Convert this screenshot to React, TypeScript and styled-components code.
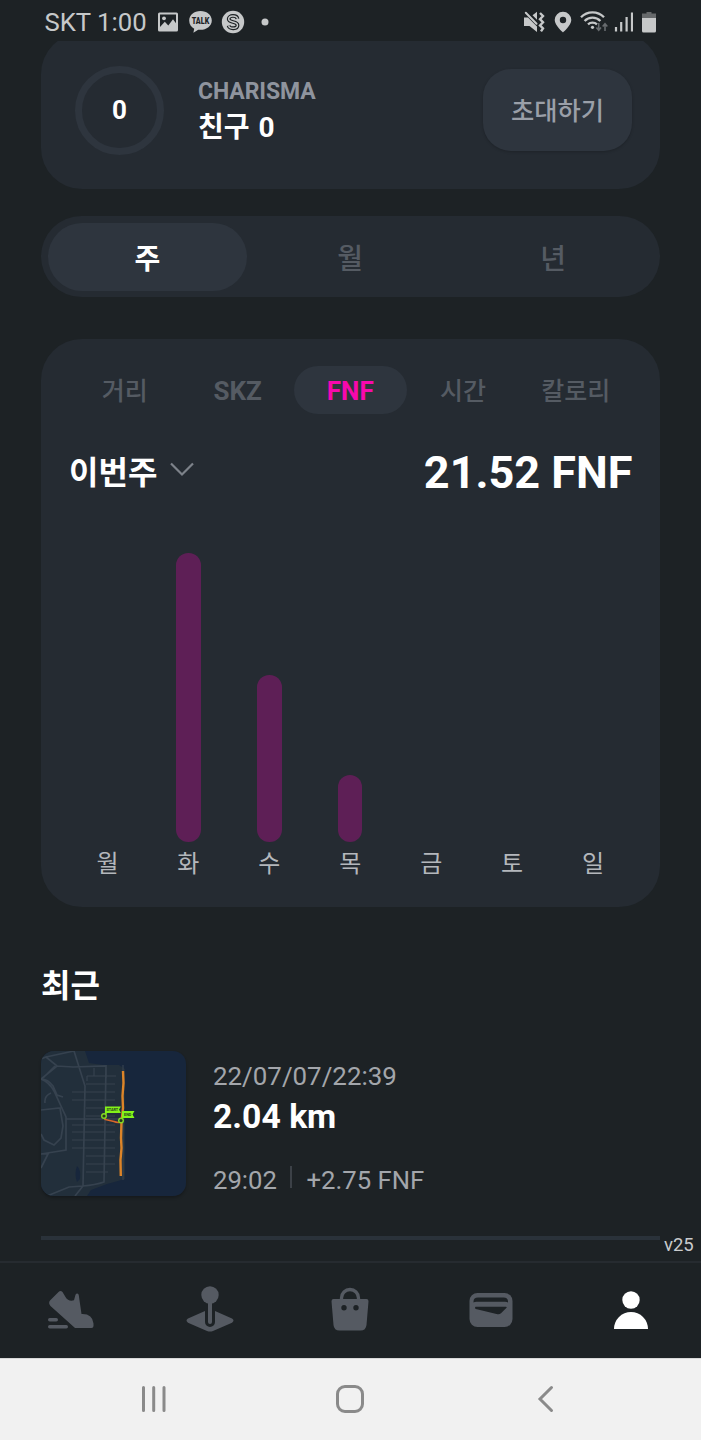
import React from "react";
import styled, { createGlobalStyle } from "styled-components";

const GlobalStyle = createGlobalStyle`
  * { box-sizing: border-box; }
  html, body { margin: 0; padding: 0; background: #1d2225; }
  body { font-family: Roboto, "Noto Sans CJK KR", sans-serif; color: #fff; }
  button { font: inherit; border: 0; padding: 0; background: none; color: inherit; }
  svg { display: block; }
`;

const Screen = styled.div`
  width: 701px;
  height: 1440px;
  display: flex;
  flex-direction: column;
  overflow: hidden;
  background: #1d2225;
`;

const StatusBar = styled.header`
  height: 41px;
  flex: none;
  display: flex;
  align-items: center;
  justify-content: space-between;
  padding: 2px 45px 0 44.500px;
  color: #c6c8c9;
`;

const StatusGroup = styled.div`
  display: flex;
  align-items: center;
`;

const Carrier = styled.span`
  font-size: 25.700px;
  line-height: 30px;
  width: 112.500px;
  white-space: nowrap;
  padding-top: 1px;
`;

const Content = styled.main`
  flex: 1;
  min-height: 0;
  overflow: hidden;
  padding: 0 41.5px 0 41px;
  display: flex;
  flex-direction: column;
`;

const ProfileCard = styled.section`
  flex: none;
  height: 156px;
  margin-top: -8px;
  border-radius: 41px;
  background: #252b32;
  display: flex;
  align-items: center;
  padding: 0 27.500px 2px 34px;
`;

const Ring = styled.div`
  width: 89px;
  height: 89px;
  border: 7px solid #2e353e;
  border-radius: 50%;
  display: flex;
  align-items: center;
  justify-content: center;
  font-size: 26px;
  font-weight: 700;
`;

const ProfileText = styled.div`
  margin-left: 34px;
  flex: 1;
  display: flex;
  flex-direction: column;
  padding-top: 3px;
`;

const StatName = styled.span`
  font-size: 23px;
  line-height: 32px;
  font-weight: 700;
  letter-spacing: -0.1px;
  color: #8f949e;
`;

const StatValue = styled.span`
  font-size: 28px;
  line-height: 40px;
  font-weight: 700;
  word-spacing: 2px;
`;

const InviteButton = styled.button`
  width: 149px;
  height: 82px;
  border-radius: 28px;
  background: #2e353e;
  box-shadow: 0 1px 3px rgba(0, 0, 0, 0.2);
  color: #9a9fa8;
  font-size: 25.300px;
  font-weight: 500;
  padding-bottom: 2px;
`;

const PeriodSwitch = styled.div`
  flex: none;
  height: 81px;
  margin-top: 27px;
  border-radius: 40.5px;
  background: #252b32;
  padding: 6.5px 7px;
  display: grid;
  grid-template-columns: repeat(3, 1fr);
  gap: 4px;
`;

const Period = styled.button<{ $active?: boolean }>`
  border-radius: 34px;
  font-size: 28px;
  font-weight: ${(p) => (p.$active ? 700 : 500)};
  background: ${(p) => (p.$active ? "#2e353e" : "transparent")};
  color: ${(p) => (p.$active ? "#fff" : "#555b63")};
`;

const ChartCard = styled.section`
  flex: none;
  height: 568px;
  margin-top: 42px;
  border-radius: 41px;
  background: #252b32;
  padding: 27px 26px 0 26px;
  display: flex;
  flex-direction: column;
`;

const Metrics = styled.div`
  display: grid;
  grid-template-columns: repeat(5, 1fr);
  height: 48px;
  margin: 0 1.5px;
`;

const Metric = styled.button<{ $active?: boolean }>`
  border-radius: 24px;
  font-size: 26px;
  font-weight: 700;
  padding-top: 2px;
  white-space: nowrap;
  background: ${(p) => (p.$active ? "#2e353e" : "transparent")};
  color: ${(p) => (p.$active ? "#f808ad" : "#555b63")};
  &:lang(ko) {
    font-size: 25px;
    font-weight: 500;
    padding: 0 0 2px;
  }
`;

const Summary = styled.div`
  display: flex;
  align-items: center;
  justify-content: space-between;
  height: 60px;
  margin: 28px 1px 0 2px;
`;

const WeekPicker = styled.button`
  display: flex;
  align-items: center;
  gap: 13px;
  font-size: 32px;
  font-weight: 700;
  padding-bottom: 4px;
`;

const Total = styled.strong`
  font-size: 45px;
  line-height: 60px;
  font-weight: 700;
  padding-top: 2px;
`;

const Chart = styled.div`
  display: grid;
  grid-template-columns: repeat(7, 1fr);
  height: 378px;
  margin-top: 25px;
`;

const Day = styled.div`
  display: flex;
  flex-direction: column;
  align-items: center;
  justify-content: flex-end;
`;

const Bar = styled.div`
  width: 24.5px;
  border-radius: 12.25px;
  background: #5e1f56;
`;

const DayLabel = styled.span`
  height: 40px;
  line-height: 44px;
  margin-bottom: 23px;
  font-size: 24px;
  color: #b4b7bc;
`;

const SectionTitle = styled.h2`
  flex: none;
  margin: 55px 0 0;
  font-size: 32px;
  line-height: 48px;
  font-weight: 700;
`;

const Activity = styled.article`
  flex: none;
  display: flex;
  margin-top: 41px;
  height: 189px;
  border-bottom: 4px solid #2a323a;
`;

const Thumbnail = styled.div`
  width: 145px;
  height: 144.5px;
  border-radius: 13px;
  overflow: hidden;
  box-shadow: 0 2px 3px rgba(0, 0, 0, 0.25);
`;

const ActivityText = styled.div`
  margin-left: 27px;
  display: flex;
  flex-direction: column;
  color: #a3a6ab;
  font-size: 25.900px;
  line-height: 30px;
  padding-top: 10px;
`;

const Distance = styled.strong`
  font-size: 33.700px;
  line-height: 40px;
  color: #fff;
  margin-top: 6px;
`;

const Details = styled.div`
  display: flex;
  align-items: center;
  margin-top: 28px;
  font-size: 25.700px;
`;

const Divider = styled.i`
  width: 2px;
  height: 22px;
  margin: -7px 14px 0 13.500px;
  background: #3c4147;
`;

const Version = styled.span`
  position: absolute;
  left: 664px;
  top: 1234px;
  font-size: 18.500px;
  line-height: 22px;
  color: #c9cbcd;
`;

const TabBar = styled.nav`
  flex: none;
  height: 97px;
  border-top: 2px solid #262b30;
  display: grid;
  grid-template-columns: repeat(5, 1fr);
`;

const Tab = styled.button<{ $active?: boolean }>`
  display: flex;
  align-items: center;
  justify-content: center;
  padding-bottom: 4px;
  color: ${(p) => (p.$active ? "#fff" : "#555a62")};
`;

const SystemNav = styled.footer`
  flex: none;
  height: 82px;
  background: #f1f1f1;
  border-top: 1px solid #d8d8d8;
  display: grid;
  grid-template-columns: repeat(3, 196px);
  align-items: center;
  justify-items: center;
  padding: 0 0 2px 56px;
  color: #8a8a8a;
`;

const StatusIcons = () => (
  <StatusGroup>
    <svg width="22" height="22" viewBox="0 0 22 22">
      <path d="M0 6.500h4L13 15.500V21l-7.500-6H0zM8.500 4.200L13 .8v8z" fill="currentColor" />
      <path d="M1.800 1.800L12.500 12.800" stroke="currentColor" strokeWidth="2" strokeLinecap="round" />
      <path d="M16 1.500l3 3-3 3.200 3 3-3 3.200 3 3-2 3" transform="translate(0 .5)" fill="none" stroke="currentColor" strokeWidth="2.400" />
    </svg>
    <svg width="18" height="22" viewBox="0 0 18 22" style={{ marginLeft: 8 }}>
      <path d="M9 .8a8.300 8.300 0 0 0-8.300 8.300C.7 14.500 9 21.500 9 21.500s8.300-7 8.300-12.400A8.300 8.300 0 0 0 9 .8zm0 5a3.200 3.200 0 1 1 0 6.400 3.200 3.200 0 0 1 0-6.400z" fill="currentColor" />
    </svg>
    <svg width="28" height="22" viewBox="0 0 28 22" style={{ marginLeft: 8 }}>
      <g fill="none" stroke="currentColor" strokeWidth="2.300">
        <path d="M1 6.200a16 16 0 0 1 23 0" />
        <path d="M4.600 10a11 11 0 0 1 15.800 0" />
        <path d="M8 13.400a6.500 6.500 0 0 1 9 0" />
      </g>
      <circle cx="12.500" cy="16.300" r="1.600" fill="currentColor" />
      <path d="M18.700 12v7m-2.300-2.500l2.300 2.700 2.300-2.700M25 20v-7m-2.300 2.500l2.300-2.700 2.300 2.700" fill="none" stroke="#676b6e" strokeWidth="1.600" />
    </svg>
    <svg width="19" height="22" viewBox="0 0 19 22" style={{ marginLeft: 6 }}>
      <path d="M2 20.500v-4.500M7.200 20.500v-9.500M12.600 20.500V6M18 20.500V1.500" stroke="currentColor" strokeWidth="2.200" />
    </svg>
    <svg width="14" height="22" viewBox="0 0 14 22" style={{ marginLeft: 9 }}>
      <path d="M4.500 1h5v1.500H14V7H0V2.500h4.500z" fill="#66696b" />
      <path d="M0 7h14v13a1.500 1.500 0 0 1-1.500 1.500h-11A1.500 1.500 0 0 1 0 20z" fill="currentColor" />
    </svg>
  </StatusGroup>
);

const AppIcons = () => (
  <svg width="114" height="24" viewBox="0 0 114 24">
    <path fillRule="evenodd" fill="currentColor" d="M2.500 2.500h17a1.500 1.500 0 0 1 1.500 1.500v16a1.500 1.500 0 0 1-1.500 1.500h-17A1.500 1.500 0 0 1 1 20V4a1.500 1.500 0 0 1 1.500-1.500zM3 4.500v12.500l4.800-5.300 3.500 3.800 4.700-6.200 3 4V4.500z" />
    <circle cx="7" cy="8.300" r="1.900" fill="currentColor" />
    <path fill="currentColor" d="M43.500 1C37 1 32.200 5 32.200 10.500c0 3.800 2 6.600 5 8.200l-.8 4 4.800-3c7.300 1 13.600-3.200 13.600-9.200C54.800 5 50 1 43.500 1z" />
    <text x="43.500" y="13.600" textAnchor="middle" fontFamily="Roboto" fontSize="8.400" fontWeight="900" fill="#1d2225" textLength="17.500" lengthAdjust="spacingAndGlyphs">TALK</text>
    <circle cx="76" cy="12" r="11.200" fill="currentColor" />
    <path d="M80.500 8.800c-.8-4-8.800-3.800-8.800.2 0 4 8.800 2 8.800 6.200 0 4-8 4-8.900.4" fill="none" stroke="#1d2225" strokeWidth="3.800" />
    <path d="M80.500 8.800c-.8-4-8.800-3.800-8.800.2 0 4 8.800 2 8.800 6.200 0 4-8 4-8.900.4" fill="none" stroke="currentColor" strokeWidth="1.500" />
    <circle cx="108" cy="12" r="3.500" fill="currentColor" />
  </svg>
);

const RouteMap = () => (
  <svg width="145" height="145" viewBox="0 0 145 145">
    <rect width="145" height="145" fill="#17263c" />
    <path d="M0 0h44l4 12 14 2h16l6 4v110l-18 5-16 6-4 6H0z" fill="#222f3b" />
    <path d="M36 115q4 3 3 13l-3 3q-3-8 0-16z" fill="#17263c" />
    <g fill="none" stroke="#36424f" strokeWidth="1.700">
      <path d="M0 8L5 6l11 9 16 1 33-1v12M5 6L33 0l11 35-2 100-8 10M16 15L0 28q8 3 13 12l12 26v33L0 103M0 28q7 0 12 7l4 9 6 2M14 15L2 27M65 16l-2 115q-9 3-21 4l-14 1-22 9M25 68h57M0 59l19-2 3 18-2 12-7 7-10-5-3-6M0 103l7 0-7 14M10 42q-7 3-6 10" />
      <path d="M53 17v8h12M46 25h29M46 25v5M45 33h29M31 41h43M31 49h43M45 57h29M45 65h29M31 74h43M31 81h43M31 89h43M31 97h43M45 105h29M45 113h29M45 121h22M82 14v115" strokeWidth="1.200" />
    </g>
    <path d="M82 20l.5 12-1 13 .5 12-1.500 14-.5 16 .5 10-1 12 .3 16" fill="none" stroke="#dd8428" strokeWidth="2.400" />
    <path d="M81 71q-5 1-8-.5l-9-2v-4" fill="none" stroke="#d9662a" strokeWidth="1.500" />
    <g fill="#83f319">
      <path d="M64 55.500h16l-2 3 2 3.500H66l-2 4z" />
      <path d="M81 60h12.500l-2 3.500 2 3.500H82l-1 3z" />
    </g>
    <g fill="#26391e" stroke="#83d823" strokeWidth="1.400">
      <circle cx="63" cy="65" r="2.300" />
      <circle cx="80" cy="69.500" r="2.300" />
    </g>
    <g fontFamily="Roboto" fontSize="3.800" fontWeight="700" fill="#26391e">
      <text x="65.500" y="60.300">START</text>
      <text x="83" y="65">END</text>
    </g>
  </svg>
);

const ShoeIcon = () => (
  <svg width="48" height="48" viewBox="-1 0 48 48" fill="currentColor">
    <path d="M3 15.500L11.500 7q2-2 4 0l3 5q3 5 8.500 3.300l1.500-5.500q1.600-2.400 3.200 0L34.500 29q11-.5 12 9.500v2.500q0 2-2 2H28L3.500 21Q1 18 3 15.500z" />
    <rect x="1" y="33" width="10" height="3.500" rx="1.700" />
    <rect x="1" y="40" width="20" height="3.500" rx="1.700" />
  </svg>
);

const JoystickIcon = () => (
  <svg width="48" height="48" viewBox="0 0 48 48" fill="currentColor">
    <circle cx="24" cy="10" r="8.700" />
    <path d="M22 17h4v20a2 2 0 0 1-4 0z" />
    <path d="M19 26v11a5 5 0 0 0 10 0V26l17 7.500q3 2 0 4.200L27 46q-3 1.200-6 0L2 37.700q-3-2.200 0-4.200z" />
  </svg>
);

const BagIcon = () => (
  <svg width="48" height="48" viewBox="0 0 48 48">
    <path d="M15.500 16v-3a8.500 8.500 0 0 1 17 0v3" fill="none" stroke="currentColor" strokeWidth="3.300" />
    <path fillRule="evenodd" fill="currentColor" d="M7.500 14h33q2 0 2 2.200L40.500 40q-.6 5.500-6 5.500h-21q-5.400 0-6-5.500L5.500 16.200q0-2.200 2-2.200zM18 20a2.700 2.700 0 1 0 0 5.400 2.700 2.700 0 0 0 0-5.400zm12 0a2.700 2.700 0 1 0 0 5.400 2.700 2.700 0 0 0 0-5.400z" />
  </svg>
);

const WalletIcon = () => (
  <svg width="48" height="48" viewBox="0 0 48 48">
    <rect x="2.500" y="8" width="43" height="34" rx="8" fill="currentColor" />
    <path d="M6.500 17.500v-1q0-4 4.500-4h25.500q4.500 0 4.500 4v1q-1-.7-3-.7h-28.500q-2 0-3 .7zM8.500 21.800H39q1.500.2.3 1.300L34 28.300q-1.500 1.300-3.500.9L8.800 24q-1.800-.8-.3-2.200z" fill="#1d2225" />
  </svg>
);

const PersonIcon = () => (
  <svg width="48" height="48" viewBox="0 0 48 48" fill="currentColor">
    <circle cx="24" cy="15" r="8.700" />
    <path d="M7 44a17 17 0 0 1 34 0z" />
  </svg>
);

const days = [
  { label: "월", value: 0 },
  { label: "화", value: 289 },
  { label: "수", value: 167 },
  { label: "목", value: 67 },
  { label: "금", value: 0 },
  { label: "토", value: 0 },
  { label: "일", value: 0 },
];

export default function App() {
  return (
    <Screen>
      <GlobalStyle />
      <StatusBar>
        <StatusGroup>
          <Carrier>SKT 1:00</Carrier>
          <AppIcons />
        </StatusGroup>
        <StatusIcons />
      </StatusBar>
      <Content>
        <ProfileCard>
          <Ring>0</Ring>
          <ProfileText>
            <StatName>CHARISMA</StatName>
            <StatValue>친구 0</StatValue>
          </ProfileText>
          <InviteButton>초대하기</InviteButton>
        </ProfileCard>
        <PeriodSwitch>
          <Period $active>주</Period>
          <Period>월</Period>
          <Period>년</Period>
        </PeriodSwitch>
        <ChartCard>
          <Metrics>
            <Metric lang="ko">거리</Metric>
            <Metric>SKZ</Metric>
            <Metric $active>FNF</Metric>
            <Metric lang="ko">시간</Metric>
            <Metric lang="ko">칼로리</Metric>
          </Metrics>
          <Summary>
            <WeekPicker>
              이번주
              <svg width="24" height="16" viewBox="0 0 24 16">
                <path d="M1 1.500l11 11 11-11" fill="none" stroke="#7d828a" strokeWidth="2.200" />
              </svg>
            </WeekPicker>
            <Total>21.52 FNF</Total>
          </Summary>
          <Chart>
            {days.map((day) => (
              <Day key={day.label}>
                {day.value > 0 && <Bar style={{ height: day.value }} />}
                <DayLabel>{day.label}</DayLabel>
              </Day>
            ))}
          </Chart>
        </ChartCard>
        <SectionTitle>최근</SectionTitle>
        <Activity>
          <Thumbnail>
            <RouteMap />
          </Thumbnail>
          <ActivityText>
            <span>22/07/07/22:39</span>
            <Distance>2.04 km</Distance>
            <Details>
              <span>29:02</span>
              <Divider />
              <span>+2.75 FNF</span>
            </Details>
          </ActivityText>
        </Activity>
      </Content>
      <Version>v25</Version>
      <TabBar>
        <Tab><ShoeIcon /></Tab>
        <Tab><JoystickIcon /></Tab>
        <Tab><BagIcon /></Tab>
        <Tab><WalletIcon /></Tab>
        <Tab $active><PersonIcon /></Tab>
      </TabBar>
      <SystemNav>
        <svg width="28" height="28" viewBox="0 0 28 28">
          <path d="M3.500 2.500v23M13.700 2.500v23M24 2.500v23" stroke="currentColor" strokeWidth="3" strokeLinecap="round" />
        </svg>
        <svg width="28" height="28" viewBox="0 0 28 28">
          <rect x="1.500" y="1.500" width="25" height="25" rx="7.500" fill="none" stroke="currentColor" strokeWidth="3" />
        </svg>
        <svg width="18" height="28" viewBox="0 0 18 28">
          <path d="M14.500 2.500L3 14l11.500 11.500" fill="none" stroke="currentColor" strokeWidth="3" strokeLinecap="round" />
        </svg>
      </SystemNav>
    </Screen>
  );
}
